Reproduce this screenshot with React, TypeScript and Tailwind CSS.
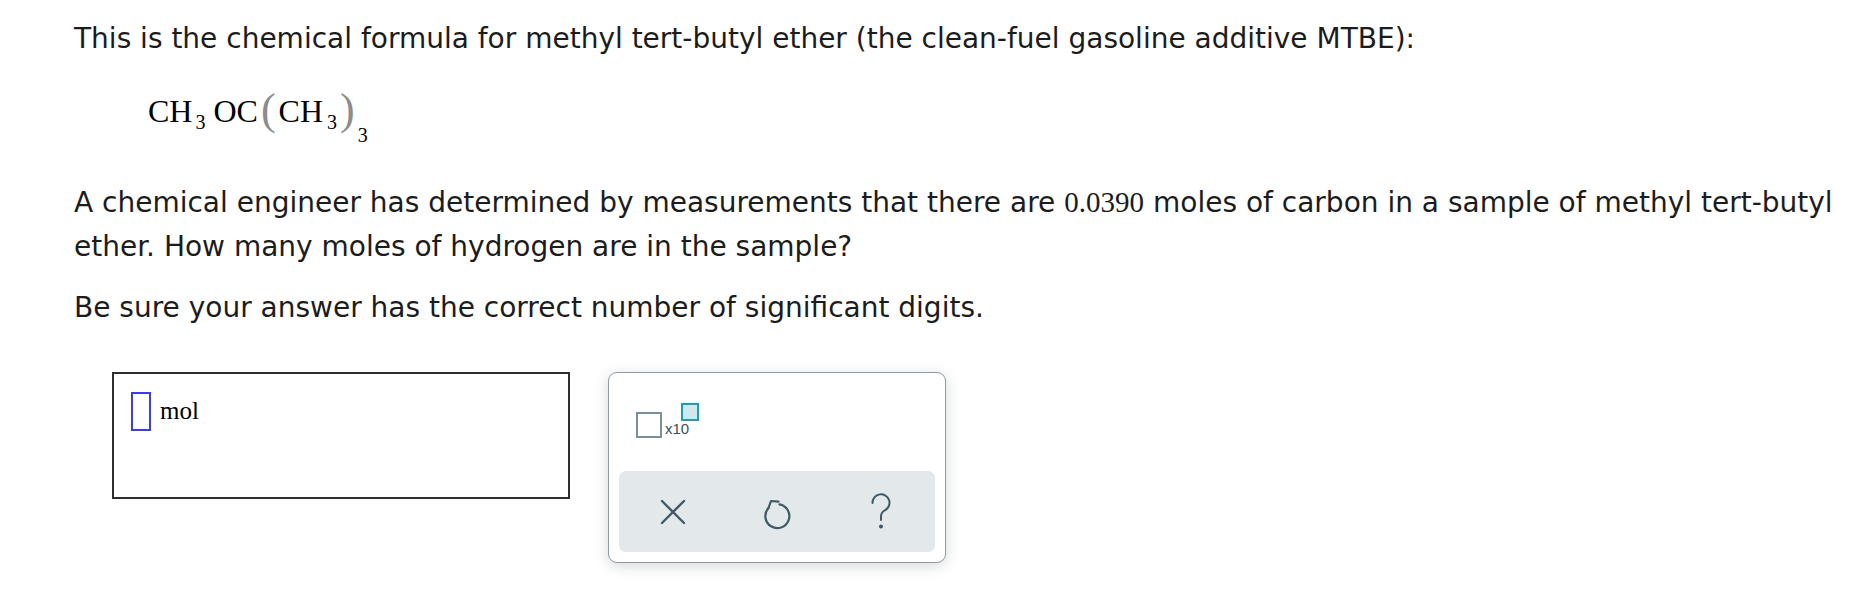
import React from 'react';

const sans = { fontFamily: '"DejaVu Sans", Verdana, sans-serif' };
const serif = { fontFamily: '"Liberation Serif", "Times New Roman", serif' };

const ClearIcon = () => (
  <svg width="26" height="26" viewBox="0 0 26 26" fill="none" stroke="#3f5a64" strokeWidth="2.4" strokeLinecap="round">
    <path d="M2 2 L24 24" />
    <path d="M24 2 L2 24" />
  </svg>
);

const ResetIcon = () => (
  <svg width="32" height="38" viewBox="0 0 32 38" fill="none" stroke="#3f5a64" strokeWidth="2.2" strokeLinecap="round" strokeLinejoin="round">
    <path d="M7.5 15 A12 12 0 1 0 18.5 11.3" />
    <path d="M17.5 8.6 L10 8 L7.5 15" />
  </svg>
);

const HelpIcon = () => (
  <svg width="24" height="38" viewBox="0 0 24 38" fill="none" stroke="#3f5a64" strokeWidth="2" strokeLinecap="round">
    <path d="M3.5 10 A8.5 8.5 0 1 1 15.5 17.5 C13 19 12 21 12 23.5 V27" />
    <circle cx="12" cy="33.5" r="1" fill="#3f5a64" />
  </svg>
);

const Formula = () => (
  <div className="flex items-baseline h-[56px] leading-[56px] text-[32px] text-black" style={serif}>
    <span>CH</span>
    <span className="text-[20px] relative top-[7px] ml-[3px]">3</span>
    <span className="ml-[8px]">OC</span>
    <span className="text-[44px] text-[#8c8c8c] relative top-[2px] ml-[3px]">(</span>
    <span className="ml-[3px]">CH</span>
    <span className="text-[20px] relative top-[7px] ml-[4px]">3</span>
    <span className="text-[44px] text-[#8c8c8c] relative top-[2px] ml-[3px]">)</span>
    <span className="text-[20px] relative top-[20px] ml-[3px]">3</span>
  </div>
);

export default function App() {
  return (
    <div className="bg-white w-[1868px] h-[591px] pl-[74px] pt-[21px] text-[#1c1c1c]" style={sans}>
      <p className="text-[28px] leading-[36px]">
        This is the chemical formula for methyl tert-butyl ether (the clean-fuel gasoline additive MTBE):
      </p>
      <div className="pl-[74px] mt-[23px]">
        <Formula />
      </div>
      <p className="text-[28px] leading-[44px] mt-[44px] w-[1780px]">
        A chemical engineer has determined by measurements that there are
        <span className="text-[29px] mx-[9px]" style={serif}>0.0390</span>
        moles of carbon in a sample of methyl tert-butyl ether. How many moles of hydrogen are in the sample?
      </p>
      <p className="text-[28px] leading-[36px] mt-[21px]">
        Be sure your answer has the correct number of significant digits.
      </p>

      <div className="flex items-start mt-[46px] ml-[38px] gap-[38px]">
        <div className="w-[458px] h-[127px] border-2 border-[#2e2e2e] pl-[17px] pt-[18px] flex items-start">
          <div className="w-[20px] h-[39px] border-2 border-[#3b3bf0]" />
          <span className="ml-[9px] mt-[4px] text-[25px] leading-[30px] text-black" style={serif}>
            mol
          </span>
        </div>

        <div className="w-[338px] h-[191px] rounded-[9px] border-[1.5px] border-[#8d9ca3] bg-white shadow-[0_3px_14px_rgba(40,60,70,0.2)] flex flex-col">
          <div className="h-[98px] pl-[27px] pt-[30px]">
            <div className="flex items-start">
              <div className="w-[26px] h-[26px] border-2 border-[#7d8f97] mt-[9px]" />
              <span className="text-[15px] leading-[15px] text-[#3d4f57] ml-[3px] mt-[18px]" style={{ fontFamily: '"Liberation Sans", Arial, sans-serif' }}>
                x10
              </span>
              <div className="w-[18px] h-[18px] border-[2.5px] border-[#1a9fb3] bg-[#cfe7ef] -ml-[8px]" />
            </div>
          </div>
          <div className="mx-[10px] h-[81px] rounded-[7px] bg-[#e3e8ea] flex items-center pl-[34px] gap-[64px]">
            <div className="w-[40px] flex justify-center">
              <ClearIcon />
            </div>
            <div className="w-[40px] flex justify-center">
              <ResetIcon />
            </div>
            <div className="w-[40px] flex justify-center">
              <HelpIcon />
            </div>
          </div>
        </div>
      </div>
    </div>
  );
}
